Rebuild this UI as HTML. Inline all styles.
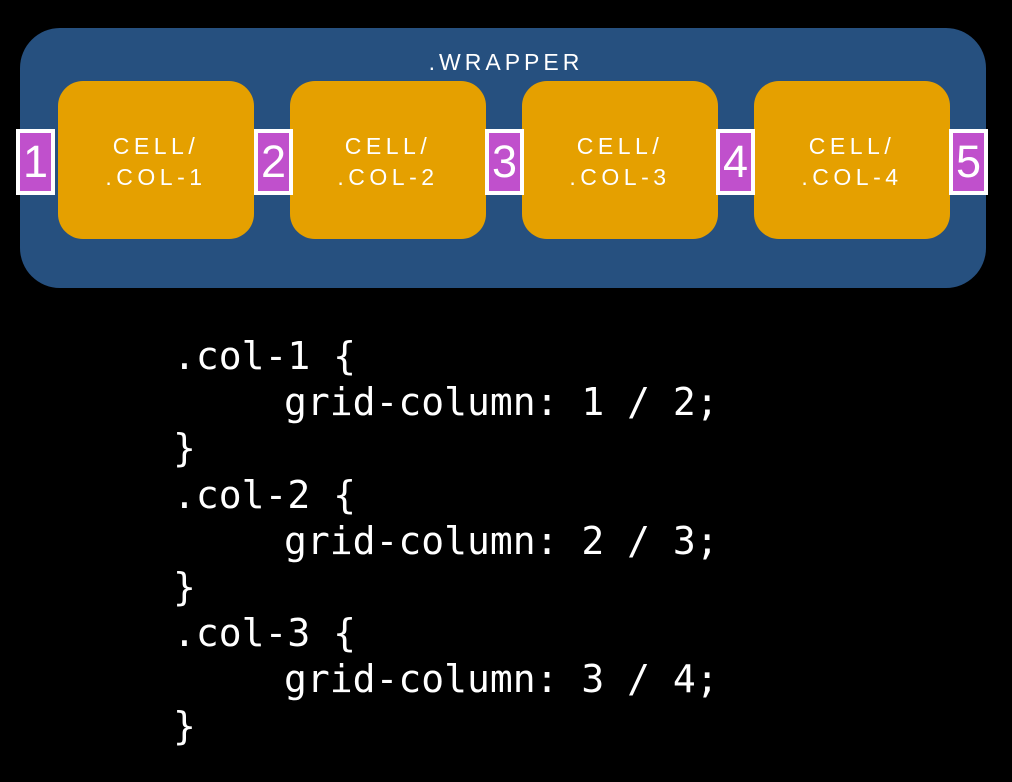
<!DOCTYPE html>
<html><head><meta charset="utf-8"><style>
body{margin:0;width:1012px;height:782px;background:#000;position:relative;overflow:hidden;font-family:"Liberation Sans",sans-serif}
.wr{position:absolute;left:20px;top:28px;width:966px;height:260px;background:#26507f;border-radius:40px}
.wt{position:absolute;left:0;width:1012px;top:49px;text-align:center;color:#fff;font-size:23px;letter-spacing:4px}
.c{position:absolute;top:81px;width:196px;height:158px;background:#e5a000;border-radius:25px;color:#fff;font-size:23px;letter-spacing:4.5px;text-align:center;line-height:31px;box-sizing:border-box;padding-top:50px}
.n{position:absolute;top:129px;width:39px;height:66px;box-sizing:border-box;border:4px solid #fff;background:#c050cc;color:#fff;font-size:45px;text-align:center;line-height:58px}
.code{position:absolute;left:173px;top:333px;color:#fff;font-family:"DejaVu Sans Mono","Liberation Mono",monospace;font-size:38px;line-height:46.2px;white-space:pre}
.i{padding-left:111px}
</style></head><body>
<div class="wr"></div>
<div class="wt">.WRAPPER</div>
<div class="c" style="left:58px">CELL/<br>.COL-1</div>
<div class="c" style="left:290px">CELL/<br>.COL-2</div>
<div class="c" style="left:522px">CELL/<br>.COL-3</div>
<div class="c" style="left:754px">CELL/<br>.COL-4</div>
<div class="n" style="left:16px">1</div>
<div class="n" style="left:254px">2</div>
<div class="n" style="left:485px">3</div>
<div class="n" style="left:716px">4</div>
<div class="n" style="left:949px">5</div>
<div class="code"><div>.col-1 {</div><div class="i">grid-column: 1 / 2;</div><div>}</div><div>.col-2 {</div><div class="i">grid-column: 2 / 3;</div><div>}</div><div>.col-3 {</div><div class="i">grid-column: 3 / 4;</div><div>}</div></div>
</body></html>
